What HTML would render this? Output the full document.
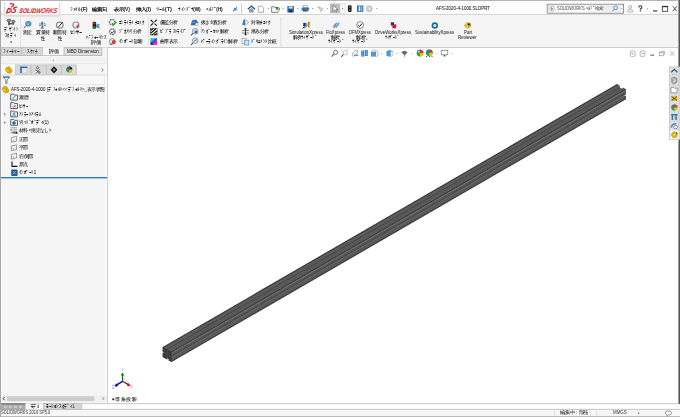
<!DOCTYPE html>
<html><head><meta charset="utf-8">
<style>
*{box-sizing:border-box;margin:0;padding:0}
html,body{width:680px;height:417px;overflow:hidden;background:#fff;font-family:"Liberation Sans",sans-serif;color:#222}
.a{position:absolute;white-space:nowrap;transform-origin:0 0}
.tx{-webkit-text-stroke:0.12px currentColor}
</style></head><body>

<!-- title bar -->
<div class="a" style="left:0;top:0;width:680px;height:15px;background:#fdfdfd;border-top:1px solid #b4b4b4;border-bottom:1px solid #d6d6d6"></div>
<!-- ribbon -->
<div class="a" style="left:0;top:15px;width:680px;height:33px;background:#f5f5f5;border-bottom:1px solid #cdcdcd"></div>
<!-- left panel -->
<div class="a" style="left:0;top:48px;width:108px;height:356px;background:#f5f5f5;border-right:1px solid #d0d0d0"></div><div class="a" style="left:105px;top:48px;width:2px;height:355px;background:#fafafa"></div>
<!-- graphics -->
<div class="a" style="left:108px;top:48px;width:571px;height:356px;background:#fff"></div>
<!-- bottom strip -->
<div class="a" style="left:0;top:403px;width:680px;height:7px;background:#fdfdfd;border-top:1px solid #cfcfcf;border-bottom:1px solid #cbcbcb"></div>
<!-- status bar -->
<div class="a" style="left:0;top:410px;width:680px;height:7px;background:#f6f6f6;border-bottom:1px solid #bababa"></div>
<!-- logo -->
<div class="a" style="left:4px;top:2px;width:56px;height:14px;background:linear-gradient(#fff,#fff 70%,#f0f0f0);border:1px solid #dadada;border-top:none;box-shadow:0 1px 1px #e4e4e4"></div>
<svg class="a" style="left:4px;top:2px" width="16" height="13" viewBox="0 0 16 13"><path d="M6.2 1.7 L9.6 2 Q10 3 9 3.8 L7.6 4.9 M4.6 6.5 Q7.6 6.6 7.3 8.6 Q6.4 10.2 2.6 10.9 Q3 8.5 4.6 6.5 M12.8 5.1 Q9.8 4.9 9.7 6.6 Q11.9 8 11.6 9.5 Q10.9 10.6 7.9 10.4" stroke="#e1222b" stroke-width="1.3" fill="none" stroke-linecap="round"/></svg>
<div class="a" style="left:19.8px;top:6.9px;font-size:13.4px;line-height:14px;color:#e0222b;font-style:italic;font-weight:bold;transform:scale(0.412,0.5) skewX(-14deg);-webkit-text-stroke:0.2px #e0222b">SOLID<span style="font-weight:normal;-webkit-text-stroke:0.5px #e0222b">WORKS</span></div>
<!-- window borders -->
<div class="a" style="left:0;top:0;width:1px;height:417px;background:#a8a8a8"></div><div class="a" style="left:1px;top:48px;width:1px;height:355px;background:#fdfdfd"></div>
<div class="a" style="left:678px;top:0;width:1px;height:404px;background:#a0a0a0"></div><div class="a" style="left:679px;top:0;width:1px;height:404px;background:#555"></div>


<svg class="a" style="left:0;top:0" width="680" height="417" viewBox="0 0 680 417"><!-- pin -->
<path d="M233.3 11.2 L235 9.5 M234.2 8.2 L236.4 10.4 M235.2 9.3 L237 7.4" stroke="#2a7bc0" stroke-width="1.1" fill="none"/>
<rect x="241.2" y="3" width="0.8" height="11" fill="#c4c4c4"/>
<!-- home -->
<path d="M247.8 9.2 L251.4 6 L255 9.2" stroke="#1f4f86" stroke-width="1.3" fill="none"/>
<path d="M249 10 L251.4 8 L253.8 10 L253.8 12.4 L249 12.4 Z" fill="#9a9a9a"/>
<!-- new -->
<path d="M258.3 6.2 L262 6.2 L263.6 7.8 L263.6 12.3 L258.3 12.3 Z" fill="#fff" stroke="#8c8c8c" stroke-width="0.7"/>
<path d="M267.6 8.3 L269 8.3 L268.3 9.3Z" fill="#555"/>
<!-- open -->
<path d="M271.6 6.8 L274.3 6.8 L275 7.6 L278.8 7.6 L279.8 9 L277.8 12.4 L271.6 12.4 Z" fill="#f4f4f4" stroke="#6a6a6a" stroke-width="0.8"/>
<path d="M274.8 6.2 L279 7.8 L277 10.6 Z" fill="#1f9a2a"/>
<path d="M282.3 8.3 L283.7 8.3 L283 9.3Z" fill="#555"/>
<!-- save -->
<rect x="287.4" y="6" width="6.4" height="6.4" fill="#1d5e9c"/>
<rect x="288.6" y="6.4" width="4" height="2.2" fill="#cfe0ee"/>
<rect x="289.1" y="10" width="3" height="2.4" fill="#333"/>
<path d="M297 8.3 L298.4 8.3 L297.7 9.3Z" fill="#555"/>
<!-- print -->
<rect x="303.4" y="5.4" width="3.8" height="2" fill="#fff" stroke="#888" stroke-width="0.5"/>
<path d="M301.8 7.6 L308.8 7.6 L309.2 10.6 L301.4 10.6 Z" fill="#2c78b8"/>
<rect x="303" y="10" width="4.6" height="1.6" fill="#5a5a5a"/>
<path d="M312 8.3 L313.4 8.3 L312.7 9.3Z" fill="#555"/>
<!-- undo grey -->
<path d="M317 7.5 L319.5 6.5 L319.5 8.3 Z M319 7.5 Q323 7.2 322.6 10 Q322 11.6 320 11.8" stroke="#c6c6c6" stroke-width="0.9" fill="#d0d0d0"/>
<path d="M326.8 8.3 L328.2 8.3 L327.5 9.3Z" fill="#777"/>
<!-- select -->
<rect x="330" y="3.5" width="10" height="9.8" fill="#bdbdbd"/>
<rect x="340" y="3.5" width="5" height="9.8" fill="#f7f7f7" stroke="#d0d0d0" stroke-width="0.5"/>
<path d="M333 5.2 L333 11.4 L334.6 10 L336 12 L336.9 11.5 L335.8 9.6 L337.8 9.4 Z" fill="#fff" stroke="#555" stroke-width="0.6"/>
<path d="M341.8 8.3 L343.2 8.3 L342.5 9.3Z" fill="#333"/>
<!-- traffic light -->
<rect x="347.9" y="5.3" width="3.7" height="6.6" rx="1.2" fill="#1a1a1a"/>
<circle cx="349.75" cy="7" r="0.9" fill="#e02020"/>
<circle cx="349.75" cy="10.2" r="0.9" fill="#2aa52a"/>
<!-- panel -->
<rect x="357" y="5.5" width="6.3" height="6.3" fill="#2a6aa8"/>
<rect x="358.6" y="6.3" width="1.6" height="4.7" fill="#e8eef4"/>
<rect x="360.6" y="6.3" width="1.8" height="4.7" fill="#8fb3d6"/>
<!-- gear -->
<circle cx="369.2" cy="8.7" r="3.1" fill="#d8d8d8" stroke="#b0b0b0" stroke-width="0.6"/>
<circle cx="369.2" cy="8.7" r="1.3" fill="#f0f0f0" stroke="#a8a8a8" stroke-width="0.4"/>
<path d="M376.2 8.3 L377.6 8.3 L376.9 9.3Z" fill="#555"/>
<!-- search box -->
<rect x="547.2" y="4.2" width="76.4" height="9" fill="#fdfdfd" stroke="#7d7d7d" stroke-width="0.8"/>
<rect x="548.2" y="5.2" width="74.4" height="7" fill="none" stroke="#d8d8d8" stroke-width="0.5"/>
<rect x="603" y="5.4" width="17" height="6.6" fill="#e9edf1"/>
<circle cx="552" cy="8.7" r="2.6" fill="#fff" stroke="#909090" stroke-width="0.6"/>
<path d="M551.2 7 L553.2 8.7 L551.2 10.4 Z" fill="#2f86c8"/>
<circle cx="615.6" cy="7.8" r="1.9" fill="none" stroke="#3a86c8" stroke-width="0.8"/>
<path d="M614.2 9.3 L612.4 11.2" stroke="#3a86c8" stroke-width="1"/>
<path d="M620.6 8.5 L621.8 8.5 L621.2 9.4Z" fill="#333"/>
<!-- person -->
<circle cx="630.2" cy="6.9" r="1.5" fill="none" stroke="#9a9a9a" stroke-width="0.7"/>
<path d="M627.8 12 Q627.8 8.8 630.2 8.8 Q632.6 8.8 632.6 12 Z" fill="none" stroke="#9a9a9a" stroke-width="0.7"/>
<!-- ? -->
<path d="M638.8 7.4 Q638.8 5.7 640.3 5.7 Q641.9 5.7 641.9 7.2 Q641.9 8.2 640.4 8.9 L640.4 9.7" stroke="#333" stroke-width="1.1" fill="none"/>
<rect x="639.8" y="10.4" width="1.2" height="1.1" fill="#333"/>
<path d="M646.6 8.5 L647.8 8.5 L647.2 9.4Z" fill="#333"/>
<rect x="653" y="10.4" width="4.3" height="1.1" fill="#333"/>
<rect x="662.3" y="6.3" width="5.4" height="5" fill="none" stroke="#333" stroke-width="0.8"/>
<rect x="662" y="6" width="6" height="1.2" fill="#333"/>
<path d="M672.8 6.2 L676.8 11.2 M676.8 6.2 L672.8 11.2" stroke="#333" stroke-width="0.8"/>
<!-- separators -->
<rect x="20" y="16" width="0.8" height="31" fill="#dcdcdc"/>
<rect x="148.1" y="17" width="0.7" height="29" fill="#dcdcdc"/>
<rect x="280.5" y="17" width="0.8" height="29" fill="#d8d8d8"/>
<!-- design study -->
<ellipse cx="8.9" cy="20.4" rx="2.1" ry="1.3" fill="#8a8a8a" stroke="#555" stroke-width="0.6"/>
<path d="M7.9 21.4 L8.1 25.3 L9.9 25.3 L10.1 21.4 Z" fill="#5c5c5c"/>
<ellipse cx="13.2" cy="21.4" rx="1.9" ry="1.2" fill="#8a8a8a" stroke="#555" stroke-width="0.6"/>
<path d="M12.2 22.3 L12.3 24.8 L14.1 24.8 L14.2 22.3 Z" fill="#5c5c5c"/>
<rect x="9.6" y="23" width="3" height="1.4" fill="#555"/>
<rect x="9.8" y="21.6" width="2" height="1.2" fill="#f4f4f4"/>
<path d="M10.1 41.6 L12.3 41.6 L11.2 43.1Z" fill="#222"/>
<!-- measure -->
<path d="M23.8 28 L27 25" stroke="#222" stroke-width="1"/>
<path d="M24.6 27.3 L25.6 26.4" stroke="#e8c020" stroke-width="0.9"/>
<ellipse cx="28.3" cy="23.8" rx="3" ry="2.8" fill="#2f80c4"/>
<ellipse cx="28.1" cy="23.2" rx="2.2" ry="1.6" fill="#5ba6dc"/>
<circle cx="28" cy="24.6" r="0.9" fill="#f2d21e"/>
<!-- mass props -->
<path d="M42.2 22 L42.2 27" stroke="#1f6aa8" stroke-width="1.2"/>
<circle cx="42.2" cy="22.3" r="0.9" fill="#2b7fc0"/>
<path d="M39.2 23.8 L45.4 23.8" stroke="#2b7fc0" stroke-width="0.8"/>
<path d="M38.9 25.2 Q39.9 26.6 40.9 25.2 Z M43.9 25.2 Q44.9 26.6 45.9 25.2 Z" fill="#d08a10" stroke="#b07010" stroke-width="0.6"/>
<path d="M40.4 28.4 L42.2 26.4 L44.2 28.4 Z" fill="#1f6aa8"/>
<!-- section props -->
<ellipse cx="59.8" cy="25.2" rx="3.3" ry="3" fill="none" stroke="#8a8a8a" stroke-width="1.2"/>
<ellipse cx="59.8" cy="25.2" rx="1.8" ry="1.6" fill="#f5f5f5"/>
<path d="M58.2 27.3 L62.6 22.2" stroke="#111" stroke-width="0.9"/>
<!-- sensor -->
<circle cx="75.9" cy="25" r="3" fill="none" stroke="#8c8c8c" stroke-width="1.1"/>
<path d="M76.8 25.5 A3 3 0 0 0 79 23.4 L77.4 24.6Z" fill="#4a9ad4"/>
<path d="M76.2 25.8 L79.2 25 A3.2 3.2 0 0 1 77 28 Z" fill="#e02a1e"/>
<!-- performance -->
<rect x="92.6" y="21.8" width="3.5" height="7" rx="1.2" fill="#1a1a1a"/>
<circle cx="94.35" cy="23.3" r="1.1" fill="#e03020"/>
<circle cx="94.35" cy="27.2" r="1.1" fill="#29a329"/>
<path d="M96.2 24.4 L100 24 L98.8 26 L100 28.2 L96.2 27.4 Z" fill="#4a8ec4"/>
<!-- col1 -->
<circle cx="112.2" cy="22.2" r="2.8" fill="#f0f0f0" stroke="#7e7e7e" stroke-width="1.4" stroke-dasharray="2 0.6"/>
<path d="M112 23.3 L113.6 24.8 L116.4 21.8" stroke="#20a020" stroke-width="1.2" fill="none"/>
<circle cx="112.3" cy="31.8" r="2.8" fill="#f0f0f0" stroke="#7e7e7e" stroke-width="1.4" stroke-dasharray="2 0.6"/>
<path d="M110.8 31.8 L112.2 33.2 L114.4 30.6" stroke="#333" stroke-width="0.9" fill="none"/>
<circle cx="112.3" cy="41.5" r="3" fill="#d6e2ec" stroke="#8a8a8a" stroke-width="0.8"/>
<circle cx="113.8" cy="42" r="1.9" fill="#e03020"/>
<path d="M109 44.6 L111.6 43.2 L111.8 44.9 Z" fill="#24a024"/>
<!-- col2 -->
<path d="M150.6 19.8 L153 22.2 M154.4 23.6 L156.8 25.6 M156.8 19.6 L154.6 21.8 M153 23.4 L150.6 25.6" stroke="#1a1a1a" stroke-width="1.2"/>
<circle cx="153.7" cy="22.6" r="0.7" fill="#444"/>
<rect x="150.3" y="28.2" width="6.8" height="6.8" fill="#fff" stroke="#222" stroke-width="0.5"/>
<path d="M150.4 30.6 Q152.4 29.4 153.4 28.3 M150.5 33.2 Q154.2 31 156 28.4 M151.6 35 Q155 33 157 30.8 M154.4 35 Q156.2 34 157 33.4" stroke="#111" stroke-width="1.2" fill="none"/>
<defs><linearGradient id="rb" x1="0" y1="0" x2="1" y2="1"><stop offset="0" stop-color="#10d030"/><stop offset="0.3" stop-color="#20c0f0"/><stop offset="0.5" stop-color="#2040f0"/><stop offset="0.7" stop-color="#f020c0"/><stop offset="1" stop-color="#f02020"/></linearGradient></defs>
<rect x="150.5" y="38.2" width="6.5" height="6.6" fill="url(#rb)"/>
<path d="M150.5 44.8 L154 44.8 L150.5 41.3Z" fill="#201010" opacity="0.6"/>
<!-- col3 -->
<path d="M190.8 25.2 L192 20.4 L196 19.6 L198.2 22.6 L197.8 25.2 Z" fill="#2a6aa6"/>
<circle cx="196.8" cy="24.2" r="1.5" fill="#f3f3f3" stroke="#888" stroke-width="0.5"/>
<path d="M192.4 22.8 L195 21.6" stroke="#9cc4e4" stroke-width="0.8"/>
<circle cx="195.2" cy="31.2" r="2.8" fill="#d0d8de" stroke="#8a8a8a" stroke-width="0.8"/>
<circle cx="196" cy="32" r="1.6" fill="#2a7ab8"/>
<path d="M193 33.4 L191 35.4" stroke="#1f5f9a" stroke-width="1.1"/>
<circle cx="195.2" cy="40.6" r="2.8" fill="#dfe6ec" stroke="#8a8a8a" stroke-width="0.8"/>
<path d="M193.6 41.2 L197.2 39.6" stroke="#3a8ac8" stroke-width="1"/>
<path d="M193 42.8 L191 44.8" stroke="#1f5f9a" stroke-width="1.1"/>
<!-- col4 -->
<path d="M242.4 25 L243.4 19.8 L245.2 19.4 L245.2 25.2 Z" fill="#2a78b8"/>
<path d="M245.6 19.6 L248.6 22.4 L245.6 25" fill="none" stroke="#8a8a8a" stroke-width="0.7"/>
<path d="M242 30.6 L249 30.6 M242 33 L249 33" stroke="#333" stroke-width="0.6"/>
<path d="M245.5 28 L245.5 35.2" stroke="#222" stroke-width="0.9"/>
<path d="M244.3 29.2 L245.5 28 L246.7 29.2 M244.3 34 L245.5 35.2 L246.7 34" stroke="#222" stroke-width="0.7" fill="none"/>
<rect x="242" y="38.4" width="4.2" height="5" fill="#f4f4f4" stroke="#8a8a8a" stroke-width="0.6"/>
<rect x="244.6" y="40.2" width="4.2" height="4.8" fill="#cfe3f3" stroke="#3a8ac8" stroke-width="0.6"/>
<!-- xpress -->
<defs><linearGradient id="simg" x1="0" y1="0" x2="1" y2="0"><stop offset="0" stop-color="#1010c0"/><stop offset="0.25" stop-color="#1020e0"/><stop offset="0.45" stop-color="#10c020"/><stop offset="0.7" stop-color="#f0e010"/><stop offset="0.85" stop-color="#f06010"/><stop offset="1" stop-color="#c01010"/></linearGradient></defs>
<path d="M303.4 22.8 L308.6 23.2 L309.4 24.4 L309.3 27.8 L306.6 26.4 L303.2 26 Z" fill="url(#simg)"/>
<path d="M304 26 L306.6 26.4 L305.6 28.2 L302.6 28.4 Z" fill="#6a9ab8"/>
<path d="M302.6 28.4 L304.2 26.8" stroke="#1a5a7a" stroke-width="1"/>
<rect x="308.4" y="21.9" width="1.2" height="1.8" fill="#3a3a4a"/>
<path d="M332.5 28 Q333 22.6 338 22.2 Q340.2 22.2 339.6 23.6 Q338.6 28 333.8 28.2 Z" fill="#8cc8e8"/>
<path d="M334.5 27 Q335 24 336.6 23.4" stroke="#e03070" stroke-width="0.9" fill="none"/>
<path d="M336.4 27.4 Q337.6 25 338.8 23.4" stroke="#30a040" stroke-width="0.8" fill="none"/>
<circle cx="360.1" cy="25" r="3.4" fill="#fff" stroke="#555" stroke-width="0.7"/>
<path d="M358.3 25.2 L359.7 26.4 L362 23.6" stroke="#111" stroke-width="1" fill="none"/>
<rect x="390.8" y="22.3" width="3.2" height="3.2" fill="#23307a"/>
<rect x="392.4" y="24.3" width="3.8" height="3.9" fill="#e01020"/>
<circle cx="434.8" cy="25.5" r="3.2" fill="#1f6a9e"/>
<circle cx="434.8" cy="25.5" r="1.5" fill="#d8ecf8"/>
<path d="M464.2 25.8 L467 22.2 L470.4 23.4 L471 26.6 L467.6 28.6 Z" fill="#e8c020" stroke="#b89010" stroke-width="0.5"/>
<circle cx="469" cy="24.4" r="1.2" fill="#2a2a4a"/>
<!-- cm tabs row -->
<rect x="1" y="47.5" width="106" height="8" fill="#f4f4f4"/>
<rect x="1.5" y="47.6" width="19.8" height="7.8" fill="#d6d6d6" stroke="#b4b4b4" stroke-width="0.6"/>
<rect x="21.5" y="47.6" width="21.3" height="7.8" fill="#d6d6d6" stroke="#b4b4b4" stroke-width="0.6"/>
<rect x="43" y="47.3" width="20.5" height="8.4" fill="#f8f8f8"/>
<rect x="64" y="47.8" width="37.8" height="7.6" fill="#dedede" stroke="#a8a8a8" stroke-width="0.6"/>
<rect x="1" y="55.2" width="101" height="0.9" fill="#b3bfbf"/>
<rect x="1" y="56.1" width="106" height="7.4" fill="#f3f3f3"/>
<rect x="1" y="56.2" width="106" height="0.6" fill="#fbfbfb"/>
<rect x="1" y="63.3" width="106" height="0.6" fill="#e2e2e2"/>
<circle cx="53.4" cy="60.4" r="0.6" fill="#888"/>
<!-- panel tabs -->
<rect x="1.5" y="64.8" width="14" height="10" fill="#fafafa"/>
<rect x="15.5" y="64.9" width="15.5" height="9.7" fill="#d9d9d9" stroke="#bcbcbc" stroke-width="0.6"/>
<rect x="31" y="64.9" width="15.6" height="9.7" fill="#d9d9d9" stroke="#bcbcbc" stroke-width="0.6"/>
<rect x="46.6" y="64.9" width="15.1" height="9.7" fill="#d9d9d9" stroke="#bcbcbc" stroke-width="0.6"/>
<rect x="61.7" y="64.9" width="14.9" height="9.7" fill="#d9d9d9" stroke="#bcbcbc" stroke-width="0.6"/>
<rect x="1" y="74.6" width="106" height="0.6" fill="#d2d2d2"/>
<path d="M101.8 68.4 L103.3 70 L101.8 71.6" stroke="#555" stroke-width="0.7" fill="none"/>
<!-- part icon tab1 -->
<g transform="translate(0.00 0.00)"><path d="M5.5 69.5 Q6 66.8 8.6 66.7 Q10.4 66.8 10.8 68.8 Q12.4 69.6 12 71.6 Q11.2 73.6 9 73.3 Q6.4 72.8 5.5 69.5 Z" fill="#e8b800" stroke="#9a7400" stroke-width="0.55"/><path d="M7.6 69.4 Q8.6 68.2 9.6 69.4 Q10.4 70.6 9.6 71.6" stroke="#a88000" stroke-width="0.6" fill="none"/><circle cx="7.4" cy="70.6" r="0.7" fill="#f8e27a"/></g>
<!-- tab2 table -->
<rect x="20.2" y="66.6" width="7.2" height="6.6" fill="#c8c8c8"/>
<rect x="20.2" y="66.6" width="7.2" height="1.4" fill="#2a70ae"/>
<rect x="20.2" y="66.6" width="1.5" height="6.6" fill="#2a70ae"/>
<rect x="22.4" y="68.6" width="4.4" height="4" fill="#ececec"/>
<!-- tab3 config -->
<circle cx="37.6" cy="67.8" r="1.2" fill="none" stroke="#444" stroke-width="0.6"/>
<path d="M36 73.2 L39.6 69.4 M35.6 69.8 L39.8 72.8" stroke="#444" stroke-width="0.7"/>
<circle cx="39.2" cy="72.4" r="1" fill="none" stroke="#555" stroke-width="0.6"/>
<!-- tab4 dimxpert -->
<path d="M54 66.2 L57.4 69.8 L54 73.4 L50.6 69.8 Z" fill="#111"/>
<circle cx="54" cy="69.8" r="1.3" fill="#888"/>
<!-- tab5 display -->
<circle cx="69.2" cy="69.6" r="3" fill="#2a9a30"/>
<path d="M69.2 69.6 L69.2 66.6 A3 3 0 0 1 72.2 69.6 Z" fill="#111"/>
<path d="M69.2 69.6 L72.2 69.6 A3 3 0 0 1 69.2 72.6 Z" fill="#f0c010"/>
<path d="M69.2 69.6 L66.6 68.2 A3 3 0 0 1 69.2 66.6 Z" fill="#2060d0"/>
<path d="M69.2 69.6 L69.2 66.6 L70.6 66.9 Z" fill="#e02020"/>
<!-- filter -->
<rect x="2.2" y="75.6" width="102.2" height="8.8" fill="#f9f9f9" stroke="#e0e0e0" stroke-width="0.6"/>
<path d="M3.2 77 L9.6 77 L7 80 L7 83.4 L5.8 83.4 L5.8 80 Z" fill="#fff" stroke="#333" stroke-width="0.6"/>
<rect x="3.2" y="76.6" width="6.4" height="1.2" fill="#2a78b8"/>
<!-- tree icons -->
<g transform="translate(-3.20 19.60)"><path d="M5.5 69.5 Q6 66.8 8.6 66.7 Q10.4 66.8 10.8 68.8 Q12.4 69.6 12 71.6 Q11.2 73.6 9 73.3 Q6.4 72.8 5.5 69.5 Z" fill="#e8b800" stroke="#9a7400" stroke-width="0.55"/><path d="M7.6 69.4 Q8.6 68.2 9.6 69.4 Q10.4 70.6 9.6 71.6" stroke="#a88000" stroke-width="0.6" fill="none"/><circle cx="7.4" cy="70.6" r="0.7" fill="#f8e27a"/></g>
<g fill="#f2f2f2" stroke="#5c5c5c" stroke-width="0.95" stroke-linejoin="round"><path d="M10.7 94.2 L13.6 94.2 L14.4 95.1 L17.5 95.1 L17.5 100.1 L10.7 100.1 Z"/><path d="M10.7 102.6 L13.6 102.6 L14.4 103.5 L17.5 103.5 L17.5 108.5 L10.7 108.5 Z"/><path d="M10.7 111.0 L13.6 111.0 L14.4 111.9 L17.5 111.9 L17.5 116.9 L10.7 116.9 Z"/><path d="M10.7 119.4 L13.6 119.4 L14.4 120.3 L17.5 120.3 L17.5 125.3 L10.7 125.3 Z"/></g>
<path d="M12.4 99.2 L15.6 95.6" stroke="#2a86d0" stroke-width="1"/>
<circle cx="14.3" cy="105.9" r="1.6" fill="#b8d8ee"/>
<path d="M13.6 107.4 L15.4 105.6" stroke="#e02a1e" stroke-width="1"/>
<path d="M12.6 116.4 L14 112.6 L15.4 116.4" stroke="#2a86d0" stroke-width="0.9" fill="none"/>
<circle cx="14" cy="123" r="1.8" fill="#1f6aa8"/>
<path d="M4.3 113.1 L5.6 114.2 L4.3 115.3 Z M4.3 121.5 L5.6 122.6 L4.3 123.7 Z" fill="#333"/>
<!-- material -->
<path d="M10.4 127.8 L17 127.8 M12.6 129.8 L17 129.8 M12.6 131.6 L17 131.6" stroke="#888" stroke-width="0.8"/>
<rect x="10.4" y="129.2" width="1.8" height="1.6" fill="#4aa8e8"/>
<rect x="10.4" y="131.8" width="1.8" height="1.6" fill="#e8b400"/>
<path d="M12.4 132.9 L16.6 132.9" stroke="#111" stroke-width="0.9"/>
<circle cx="16.6" cy="132.9" r="0.9" fill="#111"/>
<!-- planes -->
<g fill="#f4f4f4" stroke="#666" stroke-width="0.6">
<path d="M11.4 137.6 L16.6 136.4 L16.6 141.2 L11.4 142.4 Z"/>
<path d="M11.4 146 L16.6 144.8 L16.6 149.6 L11.4 150.8 Z"/>
<path d="M11.4 154.4 L16.6 153.2 L16.6 158 L11.4 159.2 Z"/>
</g>
<path d="M13.4 139.6 L13.4 141.4 M13.4 148 L13.4 149.8 M13.4 156.4 L13.4 158.2" stroke="#666" stroke-width="0.5"/>
<!-- origin -->
<path d="M12 161.4 L12 166.4 L17.4 166.4" stroke="#111" stroke-width="1.1" fill="none"/>
<!-- import -->
<rect x="11.2" y="169.6" width="6.4" height="6.4" rx="1" fill="#1d5f95"/>
<path d="M12.8 174.4 L15.6 171.2 M13 171.6 L16 174.2" stroke="#b8d8f0" stroke-width="0.6"/>
<!-- rollback -->
<rect x="1" y="177" width="106" height="1.4" fill="#2a7fc0"/>
<!-- scrollbar -->
<rect x="1" y="395.6" width="106" height="6" fill="#f0f0f0"/>
<rect x="7" y="396.2" width="87.2" height="4.9" fill="#cdcdcd"/>
<path d="M4.6 397 L3.2 398.6 L4.6 400.2" stroke="#222" stroke-width="0.9" fill="none"/>
<path d="M102.6 397.2 L103.8 398.6 L102.6 400" stroke="#555" stroke-width="0.7" fill="none"/>
<!-- heads-up toolbar -->
<circle cx="335.6" cy="52.3" r="2.1" fill="none" stroke="#666" stroke-width="0.9"/>
<path d="M334 54 L331.6 56.6" stroke="#2a7ab8" stroke-width="1.2"/>
<circle cx="345.2" cy="52.6" r="2.2" fill="none" stroke="#777" stroke-width="0.8" stroke-dasharray="0.8 0.6"/>
<path d="M343.6 54.2 L341.2 56.8" stroke="#2a7ab8" stroke-width="1.2"/>
<path d="M347.2 50 L348.4 49.6 M342.2 50 L343 49.4" stroke="#999" stroke-width="0.5"/>
<path d="M352 54 L355.4 50.4 L358 50.8 L356.4 54.6 L353.2 56.4 Z" fill="#f4f4f4" stroke="#888" stroke-width="0.6"/>
<path d="M354.2 55.2 L358.4 55.2" stroke="#2a7ab8" stroke-width="1"/>
<rect x="361.2" y="50.6" width="3" height="6" fill="#3a84c0"/>
<rect x="364.8" y="50" width="3" height="6" fill="#3a84c0"/>
<path d="M362.6 51 L362.6 56.2 M366.2 50.4 L366.2 55.6" stroke="#9cc8ea" stroke-width="0.5"/>
<rect x="371" y="51.6" width="5" height="5" fill="#4a9ad2"/>
<path d="M372 50 L375 50 L377.8 51.2 L377.8 55.6 L376 56.6" fill="none" stroke="#888" stroke-width="0.6"/>
<path d="M381 53.4 L382.2 53.4 L381.6 54.2Z" fill="#555"/>
<path d="M386.4 51 L390.4 50 L393 51.4 L393 55.6 L389.4 56.8 L386.4 55.8 Z" fill="#4a9ad2"/>
<path d="M390.6 51.6 L393 51.4 L393 55.6 L390.6 56.4 Z" fill="#f4f4f4" stroke="#999" stroke-width="0.4"/>
<path d="M396 53.4 L397.2 53.4 L396.6 54.2Z" fill="#555"/>
<path d="M401.4 52.2 Q404.4 49.6 407.6 52.2 L404.6 55.4 Z" fill="#666"/>
<path d="M404.4 55 L404.8 57" stroke="#777" stroke-width="0.6"/>
<path d="M411.2 53.4 L412.4 53.4 L411.8 54.2Z" fill="#555"/>
<circle cx="420" cy="53.1" r="3.4" fill="#2aa040"/>
<path d="M420 53.1 L416.8 51.8 A3.4 3.4 0 0 1 420 49.7 Z" fill="#2a7ad0"/>
<path d="M420 53.1 L420 49.7 A3.4 3.4 0 0 1 423.4 53.1 Z" fill="#e03030"/>
<path d="M420 53.1 L423.4 53.1 A3.4 3.4 0 0 1 420 56.5 Z" fill="#f0c020"/>
<circle cx="418.8" cy="51.8" r="1" fill="#bfe6ff"/>
<circle cx="429.3" cy="52.8" r="3.4" fill="#2aa040"/>
<path d="M429.3 52.8 L426.1 51.5 A3.4 3.4 0 0 1 429.3 49.4 Z" fill="#2a7ad0"/>
<path d="M429.3 52.8 L429.3 49.4 A3.4 3.4 0 0 1 432.7 52.8 Z" fill="#e03030"/>
<path d="M429.3 52.8 L432.7 52.8 A3.4 3.4 0 0 1 429.3 56.2 Z" fill="#f0c020"/>
<path d="M426.2 56.6 L427 56.6 M428.9 56.6 L429.7 56.6 M431.6 56.6 L432.4 56.6" stroke="#111" stroke-width="1"/>
<path d="M436.2 53.4 L437.4 53.4 L436.8 54.2Z" fill="#555"/>
<rect x="441.2" y="50.4" width="6.6" height="4.4" fill="#fafafa" stroke="#777" stroke-width="0.7"/>
<path d="M443.6 55.2 L445.4 55.2 L445.4 56.4 L443.6 56.4Z" fill="#333"/>
<path d="M451.6 53.4 L452.8 53.4 L452.2 54.2Z" fill="#555"/>
<!-- graphics window buttons -->
<rect x="630.4" y="51" width="4.6" height="5.4" rx="0.8" fill="#fff" stroke="#888" stroke-width="0.6"/>
<path d="M631.4 53.2 L633 53.2 L632.2 54.2Z" fill="#222"/>
<rect x="640.2" y="51" width="4.6" height="5.4" rx="0.8" fill="#fff" stroke="#888" stroke-width="0.6"/>
<path d="M642.2 53.2 L643.8 53.2 L643 54.2Z" fill="#222"/>
<rect x="650.2" y="54.6" width="4" height="1" fill="#555"/>
<rect x="659.6" y="52.6" width="3.6" height="3.2" fill="#fff" stroke="#888" stroke-width="0.6"/>
<path d="M660.8 52.4 L660.8 51.2 L664.6 51.2 L664.6 54.4 L663.4 54.4" fill="none" stroke="#888" stroke-width="0.6"/>
<path d="M670.2 51.2 L674.2 55.8 M674.2 51.2 L670.2 55.8" stroke="#999" stroke-width="0.7"/>
<!-- task pane -->
<rect x="669.4" y="66.8" width="10.6" height="72.8" fill="#e2e2e2"/>
<rect x="669.6" y="67" width="9.4" height="72.4" fill="none" stroke="#b4b4b4" stroke-width="0.6"/>
<g stroke="#c8c8c8" stroke-width="0.5"><path d="M669.6 76 L679 76 M669.6 85 L679 85 M669.6 94 L679 94 M669.6 103 L679 103 M669.6 112 L679 112 M669.6 121 L679 121 M669.6 130 L679 130"/></g>
<rect x="670" y="130.3" width="8.8" height="8.9" fill="#f8f8f8"/>
<path d="M671.2 72.4 L674.3 69.4 L677.4 72.4" stroke="#1f4f86" stroke-width="1.3" fill="none"/>
<path d="M672 74.2 L676.6 74.2" stroke="#999" stroke-width="0.8" stroke-dasharray="0.8 0.5"/>
<path d="M671.6 78 L674.4 77.2 L677 78.2 L676.8 82.4 L674.2 84 L671.8 82.6 Z" fill="#b0b0b0" stroke="#6e6e6e" stroke-width="0.6"/>
<path d="M673.4 79.6 Q675.6 79.6 675 81.4 Q674.2 82.4 673.2 81.6" stroke="#eee" stroke-width="0.6" fill="none"/>
<path d="M671 87.6 L673.6 87.2 L674.6 88.2 L677.6 88.2 L676.8 92.8 L671 92.8 Z" fill="#fff" stroke="#777" stroke-width="0.7"/>
<rect x="671.2" y="95.8" width="6.2" height="5.2" fill="#e8c020"/>
<path d="M671.6 96.6 L677 100.4 M677 96.6 L671.6 100.4" stroke="#222" stroke-width="0.7"/>
<circle cx="674.3" cy="107.6" r="3.1" fill="#2aa040"/>
<path d="M674.3 107.6 L671.4 106.3 A3.1 3.1 0 0 1 674.3 104.5 Z" fill="#2a7ad0"/>
<path d="M674.3 107.6 L674.3 104.5 A3.1 3.1 0 0 1 677.4 107.6 Z" fill="#e03030"/>
<path d="M674.3 107.6 L677.4 107.6 A3.1 3.1 0 0 1 674.3 110.7 Z" fill="#f0c020"/>
<rect x="671" y="114" width="6.6" height="1.5" fill="#2a70ae"/>
<rect x="671.6" y="115.5" width="1.5" height="4.5" fill="#2a70ae"/>
<rect x="675.3" y="115.5" width="1.5" height="4.5" fill="#2a70ae"/>
<rect x="673.3" y="116" width="1.8" height="3.6" fill="#c8c8c8"/>
<path d="M671 127.6 Q672.4 123.4 676.4 123.8" stroke="#3a8ac8" stroke-width="1.4" fill="none"/>
<ellipse cx="675.6" cy="127.2" rx="2.1" ry="1.5" fill="#fff" stroke="#666" stroke-width="0.7"/>
<path d="M671 134.6 L673.8 131.4 L677.4 133.4 L676.6 137.2 L673.2 137.8 Z" fill="#e0b400" stroke="#a88400" stroke-width="0.5"/>
<circle cx="674.2" cy="134.8" r="1" fill="#f6e27a"/>
<path d="M676 131.4 L677.8 133.2 L676.4 134.4 Z" fill="#1a9a2a"/>
<!-- triad -->
<path d="M122.5 381.3 L122.5 375" stroke="#0a6a0a" stroke-width="1.2"/>
<path d="M122.5 372.6 L124 375 L122.5 376.6 L121 375 Z" fill="#0a700a"/>
<path d="M122.5 381.3 L128.4 384.6" stroke="#b00808" stroke-width="1.3"/>
<path d="M130.4 385.6 L127.8 386.4 L126.8 384.2 L128.6 383.2 Z" fill="#c01010"/>
<path d="M122.5 381.3 L116.8 384.8" stroke="#0808b0" stroke-width="1.4"/>
<path d="M114.6 386.2 L116 383.4 L118.2 384.6 L117 386.8 Z" fill="#1010c0"/>
<path d="M121.4 368.6 L122.5 369.8 L123.6 368.6 M122.5 369.8 L122.5 371.2" stroke="#8ed08e" stroke-width="0.6" fill="none"/>
<path d="M130.2 384.6 L132.6 388.2 M132.6 384.6 L130.2 388.2" stroke="#f08a8a" stroke-width="0.6"/>
<path d="M112 385.2 L114.4 385.2 L112 388.4 L114.4 388.4" stroke="#8a8af0" stroke-width="0.6" fill="none"/>
<rect x="112.4" y="398.4" width="1.8" height="1.8" fill="#111"/>
<!-- status / bottom strip -->
<rect x="1.5" y="403.4" width="24" height="6" fill="#ababab" stroke="#8a8a8a" stroke-width="0.5"/><rect x="1.5" y="403.4" width="24" height="1.2" fill="#7a7a7a"/><g fill="#c8c8c8"><rect x="4" y="405.6" width="3" height="2.6"/><rect x="9" y="405.6" width="3" height="2.6"/><rect x="14" y="405.6" width="3" height="2.6"/><rect x="19" y="405.6" width="3" height="2.6"/></g>
<rect x="25.5" y="403.4" width="17.6" height="6" fill="#fdfdfd" stroke="#cfcfcf" stroke-width="0.4"/>
<rect x="43.4" y="403.6" width="38.2" height="5.8" fill="#d6d6d6" stroke="#b0b0b0" stroke-width="0.5"/>
<rect x="82" y="404" width="596" height="5" fill="#fff" stroke="#d8d8d8" stroke-width="0.5"/>
<rect x="554" y="410" width="0.6" height="6" fill="#d0d0d0"/>
<rect x="590.4" y="410" width="0.6" height="6" fill="#d0d0d0"/>
<rect x="596.6" y="410" width="0.6" height="6" fill="#d0d0d0"/>
<path d="M637.8 412.8 L639.6 412.8 L638.7 414Z" fill="#222"/>
<path d="M665.4 413 Q665.4 410.8 668.2 410.8 Q671.6 410.8 671.6 413 Q671.6 415 668.4 415 L667 416.2 L667.2 415 Q665.4 414.6 665.4 413Z" fill="#f4f4f4" stroke="#666" stroke-width="0.6"/>
</svg>
<div class="a" style="left:0;top:0;width:680px;height:417px;filter:grayscale(1)"><span class="a" style="left:69.60px;top:6.50px;font-size:9.20px;line-height:9.20px;color:#111;font-weight:normal;transform:scale(0.5483,0.5);-webkit-text-stroke:0.35px #111;"><span style="-webkit-text-stroke-width:0.1px">ﾌｧｲﾙ</span>(F)</span>
<span class="a" style="left:92.20px;top:6.50px;font-size:9.20px;line-height:9.20px;color:#111;font-weight:normal;transform:scale(0.5025,0.5);-webkit-text-stroke:0.35px #111;">編集(E)</span>
<span class="a" style="left:114.00px;top:6.50px;font-size:9.20px;line-height:9.20px;color:#111;font-weight:normal;transform:scale(0.5256,0.5);-webkit-text-stroke:0.35px #111;">表示(V)</span>
<span class="a" style="left:136.00px;top:6.50px;font-size:9.20px;line-height:9.20px;color:#111;font-weight:normal;transform:scale(0.5624,0.5);-webkit-text-stroke:0.35px #111;">挿入(I)</span>
<span class="a" style="left:155.90px;top:6.50px;font-size:9.20px;line-height:9.20px;color:#111;font-weight:normal;transform:scale(0.5910,0.5);-webkit-text-stroke:0.35px #111;"><span style="-webkit-text-stroke-width:0.1px">ﾂｰﾙ</span>(T)</span>
<span class="a" style="left:177.70px;top:6.50px;font-size:9.20px;line-height:9.20px;color:#111;font-weight:normal;transform:scale(0.5045,0.5);-webkit-text-stroke:0.35px #111;"><span style="-webkit-text-stroke-width:0.1px">ｳｨﾝﾄﾞｳ</span>(W)</span>
<span class="a" style="left:206.40px;top:6.50px;font-size:9.20px;line-height:9.20px;color:#111;font-weight:normal;transform:scale(0.5066,0.5);-webkit-text-stroke:0.35px #111;"><span style="-webkit-text-stroke-width:0.1px">ﾍﾙﾌﾟ</span>(H)</span>
<span class="a" style="left:436.00px;top:6.40px;font-size:9.20px;line-height:9.20px;color:#1a1a1a;font-weight:normal;transform:scale(0.4836,0.5);-webkit-text-stroke:0.1px #1a1a1a;">AFS-2020-4-1000.SLDPRT</span>
<span class="a" style="left:557.00px;top:6.05px;font-size:9.00px;line-height:9.00px;color:#505050;font-weight:normal;transform:scale(0.4531,0.5);-webkit-text-stroke:0.05px #505050;">SOLIDWORKS <span style="-webkit-text-stroke-width:0.1px">ﾍﾙﾌﾟ</span>検索</span>
<span class="a" style="left:4.20px;top:27.10px;font-size:9.00px;line-height:9.00px;color:#222;font-weight:normal;transform:scale(0.4600,0.5);-webkit-text-stroke:0.125px #222;"><span style="-webkit-text-stroke-width:0.1px">ﾃﾞｻﾞｲﾝ</span></span>
<span class="a" style="left:5.40px;top:32.50px;font-size:9.00px;line-height:9.00px;color:#222;font-weight:normal;transform:scale(0.4560,0.5);-webkit-text-stroke:0.125px #222;"><span style="-webkit-text-stroke-width:0.1px">ｽﾀﾃﾞｨ</span></span>
<span class="a" style="left:23.00px;top:30.00px;font-size:9.00px;line-height:9.00px;color:#222;font-weight:normal;transform:scale(0.4722,0.5);-webkit-text-stroke:0.125px #222;">測定</span>
<span class="a" style="left:35.50px;top:30.00px;font-size:9.00px;line-height:9.00px;color:#222;font-weight:normal;transform:scale(0.5000,0.5);-webkit-text-stroke:0.125px #222;">質量特</span>
<span class="a" style="left:41.00px;top:35.60px;font-size:9.00px;line-height:9.00px;color:#222;font-weight:normal;transform:scale(0.3889,0.5);-webkit-text-stroke:0.125px #222;">性</span>
<span class="a" style="left:52.90px;top:30.00px;font-size:9.00px;line-height:9.00px;color:#222;font-weight:normal;transform:scale(0.4889,0.5);-webkit-text-stroke:0.125px #222;">断面特</span>
<span class="a" style="left:57.70px;top:35.60px;font-size:9.00px;line-height:9.00px;color:#222;font-weight:normal;transform:scale(0.4111,0.5);-webkit-text-stroke:0.125px #222;">性</span>
<span class="a" style="left:69.60px;top:30.00px;font-size:9.00px;line-height:9.00px;color:#222;font-weight:normal;transform:scale(0.6200,0.5);-webkit-text-stroke:0.125px #222;"><span style="-webkit-text-stroke-width:0.1px">ｾﾝｻｰ</span></span>
<span class="a" style="left:86.00px;top:35.20px;font-size:9.00px;line-height:9.00px;color:#222;font-weight:normal;transform:scale(0.5075,0.5);-webkit-text-stroke:0.125px #222;"><span style="-webkit-text-stroke-width:0.1px">ﾊﾟﾌｫｰﾏﾝｽ</span></span>
<span class="a" style="left:91.20px;top:40.30px;font-size:9.00px;line-height:9.00px;color:#222;font-weight:normal;transform:scale(0.5444,0.5);-webkit-text-stroke:0.125px #222;">評価</span>
<span class="a" style="left:118.90px;top:19.55px;font-size:9.00px;line-height:9.00px;color:#222;font-weight:normal;transform:scale(0.4818,0.5);-webkit-text-stroke:0.125px #222;"><span style="-webkit-text-stroke-width:0.1px">ｴﾝﾃｨﾃｨ</span> <span style="-webkit-text-stroke-width:0.1px">ﾁｪｯｸ</span></span>
<span class="a" style="left:119.00px;top:29.05px;font-size:9.00px;line-height:9.00px;color:#222;font-weight:normal;transform:scale(0.4521,0.5);-webkit-text-stroke:0.125px #222;"><span style="-webkit-text-stroke-width:0.1px">ｼﾞｵﾒﾄﾘ</span>分析</span>
<span class="a" style="left:119.00px;top:38.85px;font-size:9.00px;line-height:9.00px;color:#222;font-weight:normal;transform:scale(0.4896,0.5);-webkit-text-stroke:0.125px #222;"><span style="-webkit-text-stroke-width:0.1px">ｲﾝﾎﾟｰﾄ</span>診断</span>
<span class="a" style="left:159.90px;top:19.55px;font-size:9.00px;line-height:9.00px;color:#222;font-weight:normal;transform:scale(0.4917,0.5);-webkit-text-stroke:0.125px #222;">偏差分析</span>
<span class="a" style="left:160.00px;top:29.05px;font-size:9.00px;line-height:9.00px;color:#222;font-weight:normal;transform:scale(0.4625,0.5);-webkit-text-stroke:0.125px #222;"><span style="-webkit-text-stroke-width:0.1px">ｾﾞﾌﾞﾗ</span> <span style="-webkit-text-stroke-width:0.1px">ｽﾄﾗｲﾌﾟ</span></span>
<span class="a" style="left:160.00px;top:38.85px;font-size:9.00px;line-height:9.00px;color:#222;font-weight:normal;transform:scale(0.4889,0.5);-webkit-text-stroke:0.125px #222;">曲率表示</span>
<span class="a" style="left:200.60px;top:19.55px;font-size:9.00px;line-height:9.00px;color:#222;font-weight:normal;transform:scale(0.4741,0.5);-webkit-text-stroke:0.125px #222;">抜き勾配分析</span>
<span class="a" style="left:200.60px;top:29.05px;font-size:9.00px;line-height:9.00px;color:#222;font-weight:normal;transform:scale(0.4690,0.5);-webkit-text-stroke:0.125px #222;"><span style="-webkit-text-stroke-width:0.1px">ｱﾝﾀﾞｰｶｯﾄ</span>解析</span>
<span class="a" style="left:200.60px;top:38.85px;font-size:9.00px;line-height:9.00px;color:#222;font-weight:normal;transform:scale(0.4973,0.5);-webkit-text-stroke:0.125px #222;"><span style="-webkit-text-stroke-width:0.1px">ﾊﾟｰﾃｨﾝｸﾞﾗｲﾝ</span>解析</span>
<span class="a" style="left:251.20px;top:19.55px;font-size:9.00px;line-height:9.00px;color:#222;font-weight:normal;transform:scale(0.5053,0.5);-webkit-text-stroke:0.125px #222;">対称<span style="-webkit-text-stroke-width:0.1px">ﾁｪｯｸ</span></span>
<span class="a" style="left:251.20px;top:29.05px;font-size:9.00px;line-height:9.00px;color:#222;font-weight:normal;transform:scale(0.4944,0.5);-webkit-text-stroke:0.125px #222;">厚み分析</span>
<span class="a" style="left:251.20px;top:38.85px;font-size:9.00px;line-height:9.00px;color:#222;font-weight:normal;transform:scale(0.4736,0.5);-webkit-text-stroke:0.125px #222;"><span style="-webkit-text-stroke-width:0.1px">ﾄﾞｷｭﾒﾝﾄ</span>比較</span>
<span class="a" style="left:288.80px;top:29.70px;font-size:9.00px;line-height:9.00px;color:#222;font-weight:normal;transform:scale(0.4826,0.5);-webkit-text-stroke:0.03px #222;">SimulationXpress</span>
<span class="a" style="left:292.80px;top:35.35px;font-size:9.00px;line-height:9.00px;color:#222;font-weight:normal;transform:scale(0.4509,0.5);-webkit-text-stroke:0.125px #222;">解析<span style="-webkit-text-stroke-width:0.1px">ｳｨｻﾞｰﾄﾞ</span></span>
<span class="a" style="left:326.40px;top:30.00px;font-size:9.00px;line-height:9.00px;color:#222;font-weight:normal;transform:scale(0.4690,0.5);-webkit-text-stroke:0.03px #222;">FloXpress</span>
<span class="a" style="left:331.10px;top:35.00px;font-size:9.00px;line-height:9.00px;color:#222;font-weight:normal;transform:scale(0.4889,0.5);-webkit-text-stroke:0.125px #222;">解析</span>
<span class="a" style="left:328.00px;top:39.10px;font-size:9.00px;line-height:9.00px;color:#222;font-weight:normal;transform:scale(0.4514,0.5);-webkit-text-stroke:0.125px #222;"><span style="-webkit-text-stroke-width:0.1px">ｳｨｻﾞｰﾄﾞ</span></span>
<span class="a" style="left:349.00px;top:30.00px;font-size:9.00px;line-height:9.00px;color:#222;font-weight:normal;transform:scale(0.4588,0.5);-webkit-text-stroke:0.03px #222;">DFMXpress</span>
<span class="a" style="left:356.00px;top:35.00px;font-size:9.00px;line-height:9.00px;color:#222;font-weight:normal;transform:scale(0.5000,0.5);-webkit-text-stroke:0.125px #222;">解析</span>
<span class="a" style="left:352.20px;top:39.10px;font-size:9.00px;line-height:9.00px;color:#222;font-weight:normal;transform:scale(0.4514,0.5);-webkit-text-stroke:0.125px #222;"><span style="-webkit-text-stroke-width:0.1px">ｳｨｻﾞｰﾄﾞ</span></span>
<span class="a" style="left:374.90px;top:29.70px;font-size:9.00px;line-height:9.00px;color:#222;font-weight:normal;transform:scale(0.4855,0.5);-webkit-text-stroke:0.03px #222;">DriveWorksXpress</span>
<span class="a" style="left:385.00px;top:35.15px;font-size:9.00px;line-height:9.00px;color:#222;font-weight:normal;transform:scale(0.4029,0.5);-webkit-text-stroke:0.125px #222;"><span style="-webkit-text-stroke-width:0.1px">ｳｨｻﾞｰﾄﾞ</span></span>
<span class="a" style="left:415.10px;top:29.90px;font-size:9.00px;line-height:9.00px;color:#222;font-weight:normal;transform:scale(0.4824,0.5);-webkit-text-stroke:0.03px #222;">SustainabilityXpress</span>
<span class="a" style="left:463.50px;top:29.90px;font-size:9.00px;line-height:9.00px;color:#222;font-weight:normal;transform:scale(0.4965,0.5);-webkit-text-stroke:0.03px #222;">Part</span>
<span class="a" style="left:458.30px;top:34.70px;font-size:9.00px;line-height:9.00px;color:#222;font-weight:normal;transform:scale(0.4958,0.5);-webkit-text-stroke:0.03px #222;">Reviewer</span>
<span class="a" style="left:3.00px;top:48.85px;font-size:9.00px;line-height:9.00px;color:#333;font-weight:normal;transform:scale(0.5500,0.5);-webkit-text-stroke:0.05px #333;"><span style="-webkit-text-stroke-width:0.1px">ﾌｨｰﾁｬｰ</span></span>
<span class="a" style="left:27.00px;top:48.85px;font-size:9.00px;line-height:9.00px;color:#333;font-weight:normal;transform:scale(0.5250,0.5);-webkit-text-stroke:0.05px #333;"><span style="-webkit-text-stroke-width:0.1px">ｽｹｯﾁ</span></span>
<span class="a" style="left:49.00px;top:48.85px;font-size:9.00px;line-height:9.00px;color:#222;font-weight:normal;transform:scale(0.5111,0.5);-webkit-text-stroke:0.15px #222;">評価</span>
<span class="a" style="left:67.20px;top:48.55px;font-size:9.00px;line-height:9.00px;color:#222;font-weight:normal;transform:scale(0.4890,0.5);-webkit-text-stroke:0.03px #222;">MBD Dimension</span>
<span class="a" style="left:10.70px;top:86.85px;font-size:9.00px;line-height:9.00px;color:#222;font-weight:normal;transform:scale(0.4814,0.5);-webkit-text-stroke:0.075px #222;">AFS-2020-4-1000 (<span style="-webkit-text-stroke-width:0.1px">ﾃﾞﾌｫﾙﾄ</span>&lt;&lt;<span style="-webkit-text-stroke-width:0.1px">ﾃﾞﾌｫﾙﾄ</span>&gt;_表示状態</span>
<span class="a" style="left:19.20px;top:95.15px;font-size:9.00px;line-height:9.00px;color:#222;font-weight:normal;transform:scale(0.5000,0.5);-webkit-text-stroke:0.11px #222;">履歴</span>
<span class="a" style="left:19.20px;top:103.95px;font-size:9.00px;line-height:9.00px;color:#222;font-weight:normal;transform:scale(0.4450,0.5);-webkit-text-stroke:0.11px #222;"><span style="-webkit-text-stroke-width:0.1px">ｾﾝｻｰ</span></span>
<span class="a" style="left:19.20px;top:111.85px;font-size:9.00px;line-height:9.00px;color:#222;font-weight:normal;transform:scale(0.4889,0.5);-webkit-text-stroke:0.11px #222;"><span style="-webkit-text-stroke-width:0.1px">ｱﾉﾃｰﾄｱｲﾃﾑ</span></span>
<span class="a" style="left:19.20px;top:120.25px;font-size:9.00px;line-height:9.00px;color:#222;font-weight:normal;transform:scale(0.4869,0.5);-webkit-text-stroke:0.11px #222;"><span style="-webkit-text-stroke-width:0.1px">ｿﾘｯﾄﾞﾎﾞﾃﾞｨ</span>(1)</span>
<span class="a" style="left:19.20px;top:128.45px;font-size:9.00px;line-height:9.00px;color:#222;font-weight:normal;transform:scale(0.4805,0.5);-webkit-text-stroke:0.11px #222;">材料 &lt;指定なし&gt;</span>
<span class="a" style="left:19.20px;top:136.85px;font-size:9.00px;line-height:9.00px;color:#222;font-weight:normal;transform:scale(0.4944,0.5);-webkit-text-stroke:0.11px #222;">正面</span>
<span class="a" style="left:19.20px;top:145.25px;font-size:9.00px;line-height:9.00px;color:#222;font-weight:normal;transform:scale(0.4944,0.5);-webkit-text-stroke:0.11px #222;">平面</span>
<span class="a" style="left:19.20px;top:153.65px;font-size:9.00px;line-height:9.00px;color:#222;font-weight:normal;transform:scale(0.5111,0.5);-webkit-text-stroke:0.11px #222;">右側面</span>
<span class="a" style="left:19.20px;top:161.95px;font-size:9.00px;line-height:9.00px;color:#222;font-weight:normal;transform:scale(0.4944,0.5);-webkit-text-stroke:0.11px #222;">原点</span>
<span class="a" style="left:19.20px;top:170.25px;font-size:9.00px;line-height:9.00px;color:#222;font-weight:normal;transform:scale(0.4912,0.5);-webkit-text-stroke:0.11px #222;"><span style="-webkit-text-stroke-width:0.1px">ｲﾝﾎﾟｰﾄ</span>1</span>
<span class="a" style="left:115.00px;top:396.30px;font-size:10.80px;line-height:10.80px;color:#111;font-weight:normal;transform:scale(0.5000,0.5);-webkit-text-stroke:0.125px #111;">等角投影</span>
<span class="a" style="left:30.50px;top:403.75px;font-size:9.00px;line-height:9.00px;color:#222;font-weight:normal;transform:scale(0.4250,0.5);-webkit-text-stroke:0.05px #222;"><span style="-webkit-text-stroke-width:0.1px">ﾓﾃﾞﾙ</span></span>
<span class="a" style="left:45.70px;top:403.75px;font-size:9.00px;line-height:9.00px;color:#333;font-weight:normal;transform:scale(0.5235,0.5);-webkit-text-stroke:0.05px #333;"><span style="-webkit-text-stroke-width:0.1px">ﾓｰｼｮﾝｽﾀﾃﾞｨ</span>1</span>
<span class="a" style="left:1.00px;top:410.15px;font-size:9.00px;line-height:9.00px;color:#3a4050;font-weight:normal;transform:scale(0.4459,0.5);-webkit-text-stroke:0.03px #3a4050;">SOLIDWORKS 2019 SP5.0</span>
<span class="a" style="left:559.60px;top:410.25px;font-size:9.00px;line-height:9.00px;color:#333;font-weight:normal;transform:scale(0.5370,0.5);-webkit-text-stroke:0.075px #333;">編集中 : 部品</span>
<span class="a" style="left:613.30px;top:410.05px;font-size:9.00px;line-height:9.00px;color:#3a4050;font-weight:normal;transform:scale(0.4893,0.5);-webkit-text-stroke:0.03px #3a4050;">MMGS</span></div>
<!-- beam -->
<svg class="a" style="left:0;top:0" width="680" height="417" viewBox="0 0 680 417">
  <linearGradient id="bg" gradientUnits="userSpaceOnUse" x1="400.00" y1="209.57" x2="409.97" y2="226.80"><stop offset="0.009" stop-color="#3c3c3c"/><stop offset="0.052" stop-color="#3c3c3c"/><stop offset="0.070" stop-color="#5a5a5a"/><stop offset="0.183" stop-color="#5a5a5a"/><stop offset="0.200" stop-color="#4a4a4a"/><stop offset="0.235" stop-color="#4a4a4a"/><stop offset="0.252" stop-color="#585858"/><stop offset="0.400" stop-color="#585858"/><stop offset="0.417" stop-color="#434343"/><stop offset="0.461" stop-color="#434343"/><stop offset="0.478" stop-color="#686868"/><stop offset="0.522" stop-color="#686868"/><stop offset="0.539" stop-color="#565656"/><stop offset="0.591" stop-color="#565656"/><stop offset="0.609" stop-color="#4a4a4a"/><stop offset="0.643" stop-color="#4a4a4a"/><stop offset="0.661" stop-color="#626262"/><stop offset="0.704" stop-color="#626262"/><stop offset="0.722" stop-color="#585858"/><stop offset="0.817" stop-color="#585858"/><stop offset="0.835" stop-color="#3e3e3e"/><stop offset="0.991" stop-color="#3e3e3e"/></linearGradient><polygon points="162.7,346.9 617.0,84.0 626.0,89.2 626.0,99.2 171.7,362.1 162.7,356.9" fill="url(#bg)"/><polygon points="162.7,346.9 171.7,352.1 171.7,362.1 162.7,356.9" fill="#3a3a3a"/><path d="M167.2 349.8 L167.2 359.3 M163 352 L171.4 356.9" stroke="#555" stroke-width="0.7"/><path d="M165.4 354.3 L168.8 356.2" stroke="#2e2e2e" stroke-width="0.6"/>
<polygon points="619.4,85.1 623.1,87.2 622.5,88.5 620.2,88.1" fill="#fff"/>
<polygon points="626.5,94 624.2,95.3 626.5,96.3" fill="#fff"/>
<polygon points="162,351.4 164,352.2 162,353" fill="#fff"/>
<polygon points="167,358.2 169,359.4 167.5,360.2" fill="#fff"/>
</svg>

</body></html>
